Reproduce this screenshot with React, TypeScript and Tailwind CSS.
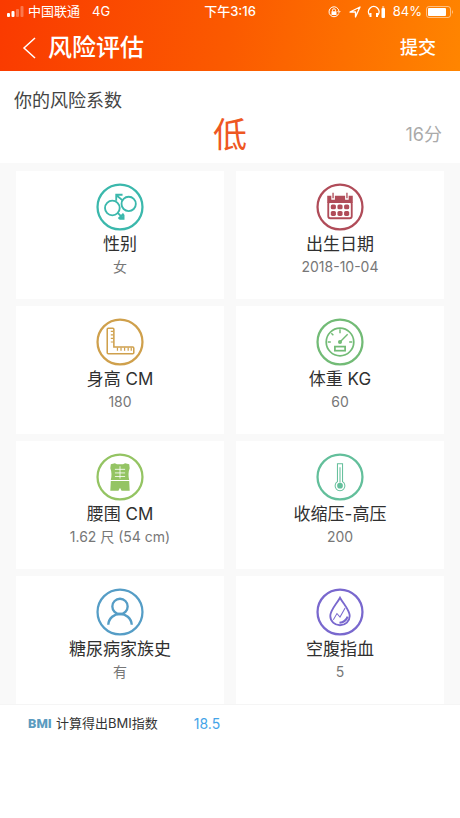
import type { ReactNode } from "react";

type Item = { label: string; value: string; color: string; icon: ReactNode };

const items: Item[] = [
  {
    label: "性别",
    value: "女",
    color: "text-[#3bb8ac]",
    icon: (
      <>
        <circle cx="16" cy="24.500" r="7.200" />
        <circle cx="32" cy="20.500" r="7" />
        <path d="M26 17 20 12M19.800 17.500V11.500H26M21.500 29.500l5.500 5.500M22 35l5-5M27 31v4h-4" />
      </>
    ),
  },
  {
    label: "出生日期",
    value: "2018-10-04",
    color: "text-[#b04c59]",
    icon: (
      <>
        <path d="M11 12.500h4v4h3.500v-4h10v4H32v-4h4v7H11z" fill="currentColor" stroke="none" />
        <path d="M16.700 9.500v5.500M30.300 9.500v5.500" strokeWidth="1.300" />
        <rect x="12" y="18.500" width="23" height="16" rx="2" />
        <g fill="currentColor" stroke="none">
          <rect x="14.500" y="21" width="5" height="4.700" rx="1.500" />
          <rect x="21" y="21" width="5" height="4.700" rx="1.500" />
          <rect x="27.500" y="21" width="5" height="4.700" rx="1.500" />
          <rect x="14.500" y="27.500" width="5" height="4.700" rx="1.500" />
          <rect x="21" y="27.500" width="5" height="4.700" rx="1.500" />
          <rect x="27.500" y="27.500" width="5" height="4.700" rx="1.500" />
        </g>
      </>
    ),
  },
  {
    label: "身高 CM",
    value: "180",
    color: "text-[#cfa04c]",
    icon: (
      <>
        <path d="M11 11q0-1 1-1h4.500q1 0 1 1v17.500H36q1 0 1 1V34q0 1-1 1H12q-1 0-1-1z" strokeWidth="1.500" />
        <path d="M17 13h-2.500M17 16.500h-2.500M17 20h-2.500M17 23.500h-2.500M21 29v3M24.500 29v3M28 29v3M31.500 29v3M34.500 29v3" strokeWidth="1.200" />
      </>
    ),
  },
  {
    label: "体重 KG",
    value: "60",
    color: "text-[#72bb76]",
    icon: (
      <>
        <circle cx="23.500" cy="23.500" r="13.500" strokeWidth="1.700" />
        <path d="M23.500 11v4M11.500 23.500h3M32.500 23.500h3M15 15l2 2M23 24l8-8" strokeWidth="1.400" />
        <circle cx="23.500" cy="23.500" r="2" fill="currentColor" stroke="none" />
        <rect x="18.500" y="28" width="10" height="4" strokeWidth="1.700" />
      </>
    ),
  },
  {
    label: "腰围 CM",
    value: "1.62 尺 (54 cm)",
    color: "text-[#94c463]",
    icon: (
      <>
        <path d="M14.500 11l4-1 2 1h6l2-1 4 1 .5 4q-2 5-.5 11.500h-18q1.500-6.500-.5-11.500zM14.500 27.500h18l.5 9.500h-8l-1.500-3-1.500 3h-8z" fill="currentColor" stroke="none" />
        <path d="M23.500 13v12M18.500 16h10M18.500 19.500h10M18.500 23h10" stroke="white" strokeWidth=".8" />
      </>
    ),
  },
  {
    label: "收缩压-高压",
    value: "200",
    color: "text-[#63bf9b]",
    icon: (
      <>
        <path d="M21 28V10.500h5V28a4.800 4.800 0 1 1-5 0z" strokeWidth="1" />
        <path d="M23.500 14v15" strokeWidth="1" />
        <circle cx="23.500" cy="32" r="2.800" fill="currentColor" stroke="none" />
      </>
    ),
  },
  {
    label: "糖尿病家族史",
    value: "有",
    color: "text-[#559dc6]",
    icon: (
      <>
        <circle cx="23.500" cy="18" r="7.500" strokeWidth="2.300" />
        <path d="M12 36c1-14 22-14 23 0" strokeWidth="2.300" />
      </>
    ),
  },
  {
    label: "空腹指血",
    value: "5",
    color: "text-[#7968ce]",
    icon: (
      <>
        <path d="M23.500 9.500C20 16 14 21.500 14 27.500a9.500 9 0 0 0 19 0c0-6-6-11.500-9.500-18z" />
        <path d="M17 31l3.500-6 3 3.500 5-9" strokeWidth="1" />
        <path d="M23 34q6-.5 8-6" strokeWidth="2" />
      </>
    ),
  },
];

function Card({ label, value, color, icon }: Item) {
  return (
    <button type="button" className="flex h-32 flex-col items-center bg-white pt-3">
      <svg className={`size-12 ${color}`} viewBox="0 0 47 47" fill="none" stroke="currentColor" strokeWidth="1.800" aria-hidden="true">
        <circle cx="23.500" cy="23.500" r="22" strokeWidth="2.200" />
        {icon}
      </svg>
      <span className="text-[17px] leading-[26px] text-[#303030]">{label}</span>
      <span className="text-sm leading-5 text-[#777]">{value}</span>
    </button>
  );
}

function StatusBar() {
  return (
    <div className="grid h-6 grid-cols-[1fr_auto_1fr] items-center px-1.5 text-[13px]">
      <div className="flex items-center">
        <svg className="mr-1 h-3 w-[18px]" viewBox="0 0 18 12" fill="currentColor" aria-hidden="true">
          <rect x="1" y="7" width="3" height="4" rx="1" />
          <rect x="5.500" y="5" width="3" height="6" rx="1" />
          <rect x="10" y="3" width="3" height="8" rx="1" opacity=".3" />
          <rect x="14.500" y="0" width="3" height="11" rx="1" opacity=".3" />
        </svg>
        <span>中国联通</span>
        <span className="ml-3">4G</span>
      </div>
      <span className="font-medium">下午3:16</span>
      <div className="flex items-center justify-end">
        <svg className="size-3.5" viewBox="0 0 14 14" fill="none" stroke="currentColor" aria-hidden="true">
          <path d="M11.700 8.500a5 5 0 1 1 .3-2M10.500 6l1.500 1.500L13.300 6" />
          <rect x="4.500" y="6.300" width="5" height="3.700" fill="currentColor" stroke="none" />
          <path d="M5.500 6.500V5.300a1.500 1.500 0 0 1 3 0v1.200" />
        </svg>
        <svg className="ml-2 size-3" viewBox="0 0 12 12" fill="none" stroke="currentColor" strokeWidth="1.300" strokeLinejoin="round" aria-hidden="true">
          <path d="M1 6 11 1 6.500 11V6z" />
        </svg>
        <svg className="ml-1.5 h-3.5 w-5" viewBox="0 0 20 14" fill="none" stroke="currentColor" strokeWidth="1.400" aria-hidden="true">
          <path d="M2.500 10a5.300 5.300 0 1 1 8.500 0" />
          <path d="M3.500 8v4M10 8v4" strokeWidth="2" />
          <rect x="14.500" y="3" width="3.500" height="10" rx="1" fill="currentColor" stroke="none" />
          <path d="M15.200 2h2" strokeWidth="1" />
        </svg>
        <span className="ml-1.5">84%</span>
        <svg className="ml-1 h-3 w-7" viewBox="0 0 28 12" fill="none" aria-hidden="true">
          <rect x=".5" y=".5" width="24" height="11" rx="2.500" stroke="currentColor" opacity=".5" />
          <rect x="2" y="2" width="18" height="8" rx="1" fill="currentColor" />
          <path d="M26 4q2 2 0 4z" fill="currentColor" opacity=".5" />
        </svg>
      </div>
    </div>
  );
}

export default function App() {
  return (
    <div className="min-h-screen bg-white font-[Inter,'Noto_Sans_CJK_SC',sans-serif]">
      <header className="bg-[linear-gradient(100deg,#fa3a00_0%,#fb5a00_50%,#ff8500_100%)] text-white">
        <StatusBar />
        <div className="flex h-[47px] items-center justify-between pr-6 pl-5">
          <div className="flex items-center gap-2">
            <button type="button" aria-label="返回">
              <svg className="h-6 w-5" viewBox="0 0 20 24" fill="none" stroke="currentColor" strokeWidth="1.500" aria-hidden="true">
                <path d="M15 2 4 12l11 10" />
              </svg>
            </button>
            <h1 className="text-2xl leading-8 font-medium">风险评估</h1>
          </div>
          <button type="button" className="text-lg font-medium">提交</button>
        </div>
      </header>

      <main>
        <section className="px-3.5 pt-4 pb-2">
          <h2 className="text-lg leading-7 text-[#444]">你的风险系数</h2>
          <div className="grid grid-cols-[1fr_auto_1fr] items-center">
            <span />
            <strong className="text-[34px] leading-10 font-normal text-[#ee5722]">低</strong>
            <span className="pr-1 text-right text-lg text-[#aaa]">16分</span>
          </div>
        </section>

        <section className="grid grid-cols-2 gap-x-3 gap-y-[7px] bg-[#f9f9f9] px-4 pt-2">
          {items.map((item) => (
            <Card key={item.label} {...item} />
          ))}
        </section>

        <section className="flex h-[38px] items-center border-t border-[#f5f5f5] px-7 text-[13px] text-[#333]">
          <span className="w-7 font-[Roboto,'Liberation_Sans',sans-serif] font-black text-[#5b9bc0]">BMI</span>
          <span>计算得出BMI指数</span>
          <span className="ml-9 text-sm text-[#45a4e8]">18.5</span>
        </section>
      </main>
    </div>
  );
}
